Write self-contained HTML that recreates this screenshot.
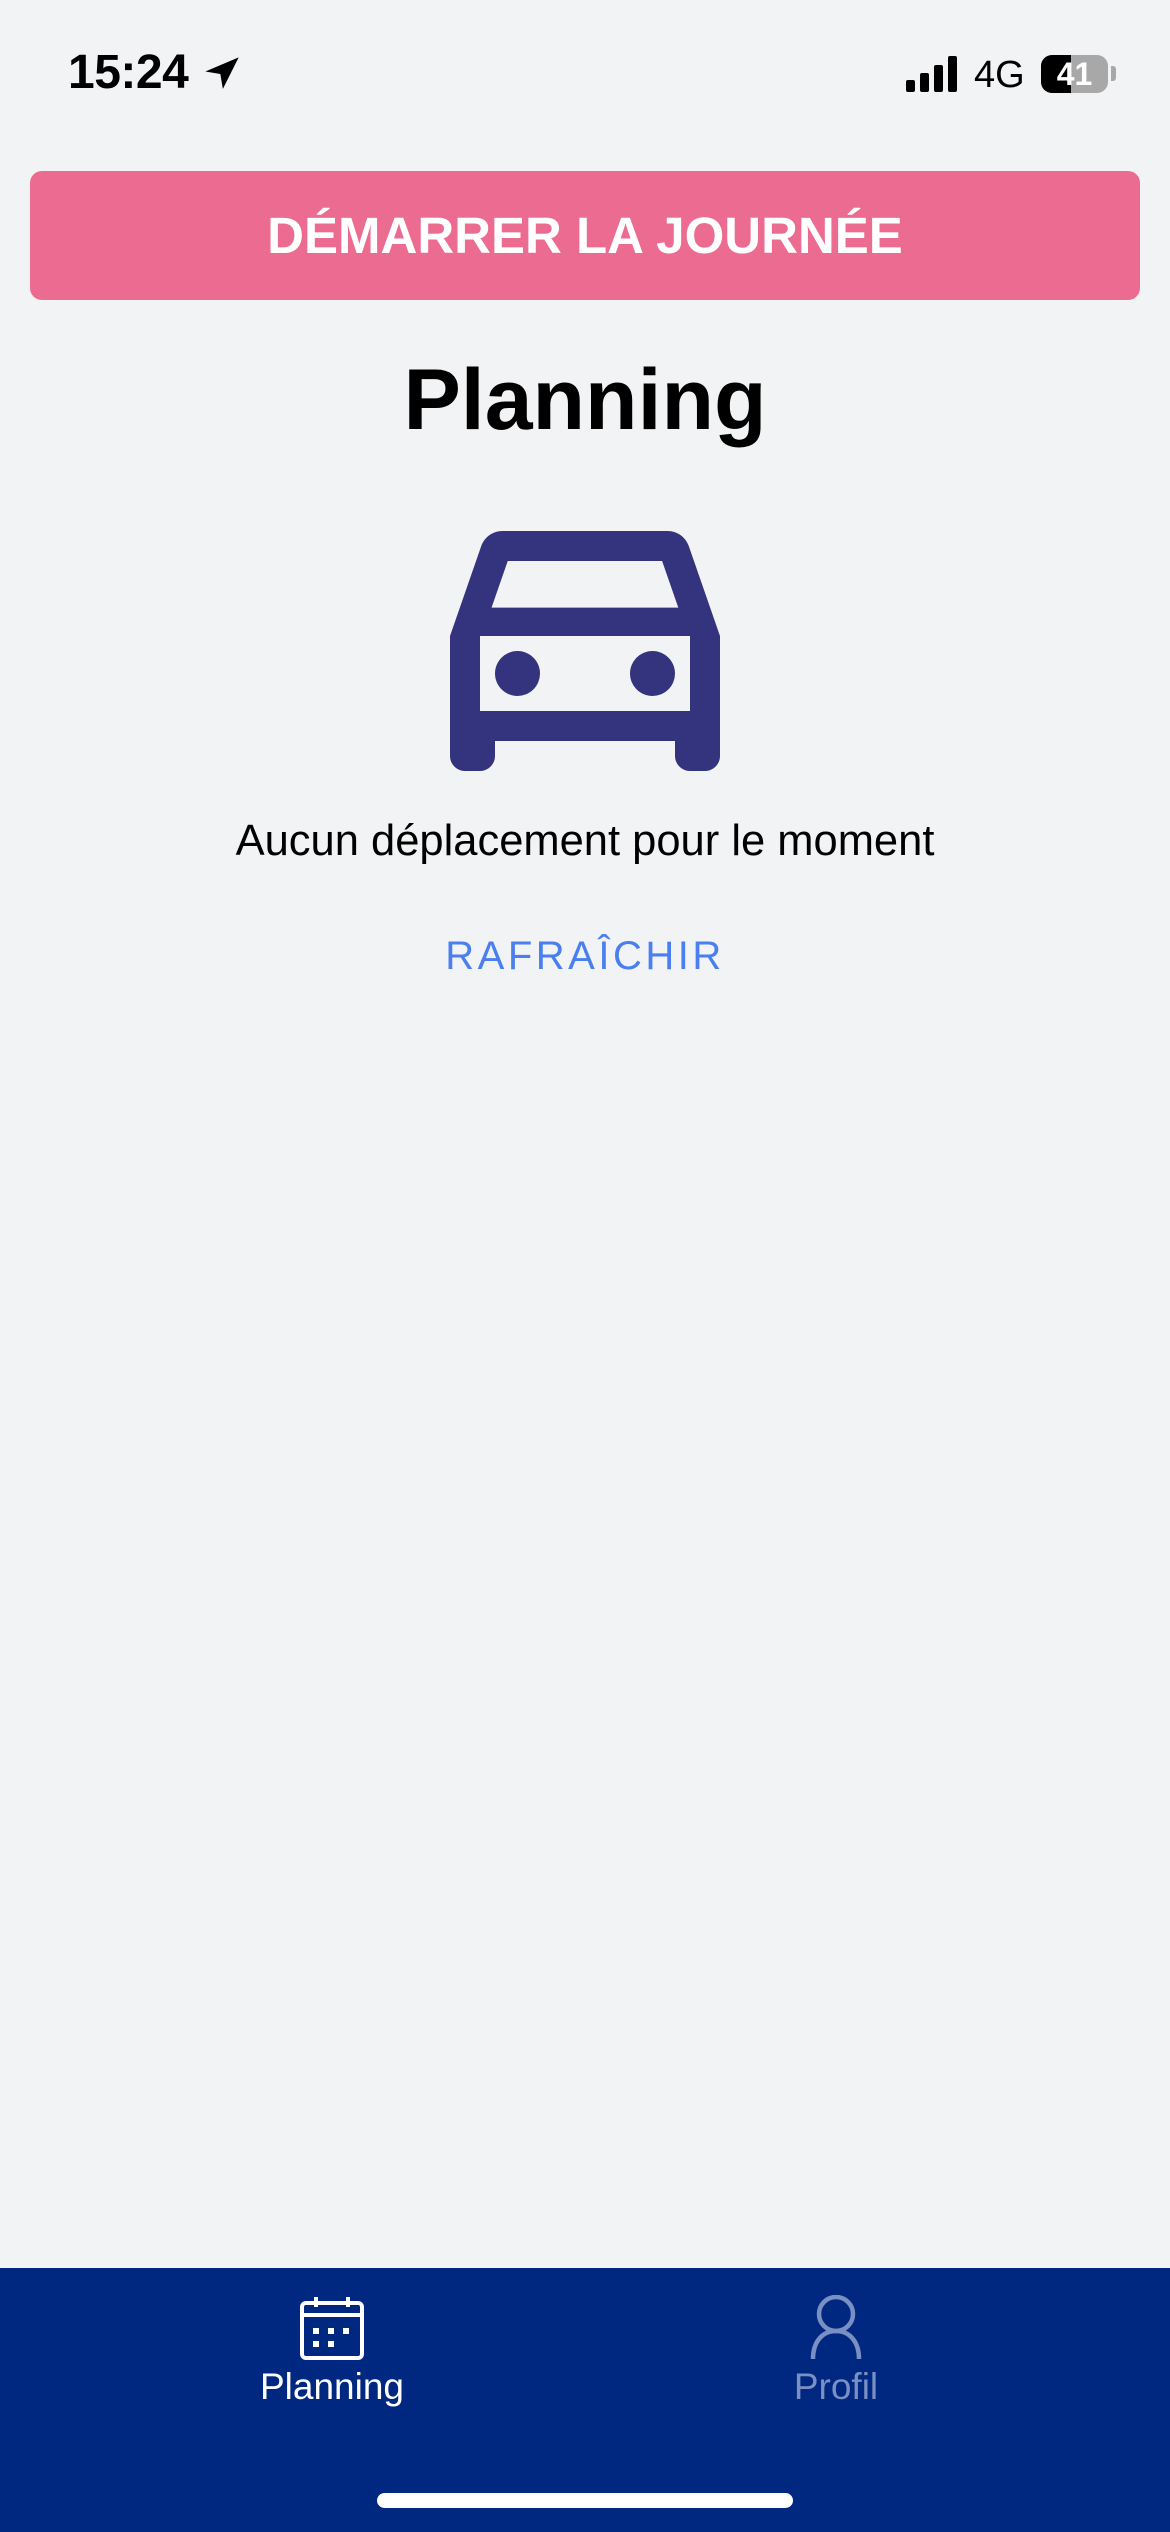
<!DOCTYPE html>
<html><head><meta charset="utf-8"><style>
*{margin:0;padding:0;box-sizing:border-box}
body{width:1170px;height:2532px;background:#f2f3f5;font-family:"Liberation Sans",sans-serif;position:relative;overflow:hidden}
.abs{position:absolute}
</style></head><body>
<div class="abs" style="left:68px;top:45px;font-size:48px;font-weight:bold;color:#000;letter-spacing:-0.5px">15:24</div>
<svg class="abs" style="left:202px;top:54px" width="40" height="40" viewBox="0 0 24 24"><path d="M22 2 2 10.5l9 1.5 1.5 9z" fill="#000"/></svg>
<svg class="abs" style="left:906px;top:56px" width="54" height="36" viewBox="0 0 54 36"><rect x="0" y="24" width="9" height="12" rx="2"/><rect x="14" y="17" width="9" height="19" rx="2"/><rect x="28" y="9" width="9" height="27" rx="2"/><rect x="42" y="0" width="9" height="36" rx="2"/></svg>
<div class="abs" style="left:974px;top:54px;font-size:38px;color:#000">4G</div>
<div class="abs" style="left:1041px;top:55px;width:67px;height:38px;border-radius:11px;background:#a8a8a8;overflow:hidden"><div style="width:30px;height:38px;background:#000"></div><div class="abs" style="left:0;top:0;width:67px;text-align:center;font-size:32px;font-weight:bold;color:#fff;line-height:38px">41</div></div>
<div class="abs" style="left:1111px;top:66px;width:5px;height:15px;border-radius:0 3px 3px 0;background:#a8a8a8"></div>
<div class="abs" style="left:30px;top:171px;width:1110px;height:129px;background:#ec6b90;border-radius:12px;color:#fff;font-weight:bold;font-size:51px;text-align:center;line-height:129px">DÉMARRER LA JOURNÉE</div>
<div class="abs" style="left:0;top:351px;width:1170px;text-align:center;font-size:86px;font-weight:bold;color:#000">Planning</div>
<svg class="abs" style="left:405px;top:456px" width="360" height="360" viewBox="0 0 24 24"><path fill="#34347e" d="M18.92 6.01C18.72 5.42 18.16 5 17.5 5h-11c-.66 0-1.210.42-1.42 1.01L3 12v8c0 .55.45 1 1 1h1c.55 0 1-.45 1-1v-1h12v1c0 .55.45 1 1 1h1c.55 0 1-.45 1-1v-8l-2.08-5.99zM6.85 7h10.29l1.080 3.11H5.77L6.85 7zM19 17H5v-5h14v5z"/><circle cx="7.5" cy="14.5" r="1.5" fill="#34347e"/><circle cx="16.5" cy="14.5" r="1.5" fill="#34347e"/></svg>
<div class="abs" style="left:0;top:817px;width:1170px;text-align:center;font-size:43.5px;color:#000">Aucun déplacement pour le moment</div>
<div class="abs" style="left:0;top:934px;width:1170px;text-align:center;font-size:40px;color:#4a7ff0;letter-spacing:3.5px">RAFRAÎCHIR</div>
<div class="abs" style="left:0;top:2268px;width:1170px;height:264px;background:#002880"></div>
<svg class="abs" style="left:299px;top:2295px" width="66" height="66" viewBox="0 0 66 66" fill="none" stroke="#fff" stroke-width="4"><rect x="3" y="8" width="60" height="55" rx="4"/><line x1="3" y1="20" x2="63" y2="20"/><line x1="17" y1="2" x2="17" y2="12"/><line x1="49" y1="2" x2="49" y2="12"/><g fill="#fff" stroke="none"><rect x="14" y="33" width="6" height="6"/><rect x="29" y="33" width="6" height="6"/><rect x="44" y="33" width="6" height="6"/><rect x="14" y="46" width="6" height="6"/><rect x="29" y="46" width="6" height="6"/></g></svg>
<div class="abs" style="left:232px;top:2366px;width:200px;text-align:center;font-size:37px;color:#fff">Planning</div>
<svg class="abs" style="left:808px;top:2295px" width="56" height="66" viewBox="0 0 56 66" fill="none" stroke="#7a8fc4" stroke-width="4.5"><ellipse cx="28" cy="19" rx="17" ry="17"/><path d="M5 64C5 46 15 36 28 36S51 46 51 64"/></svg>
<div class="abs" style="left:736px;top:2366px;width:200px;text-align:center;font-size:37px;color:#7a8fc4">Profil</div>
<div class="abs" style="left:377px;top:2493px;width:416px;height:15px;border-radius:8px;background:#fff"></div>
</body></html>
